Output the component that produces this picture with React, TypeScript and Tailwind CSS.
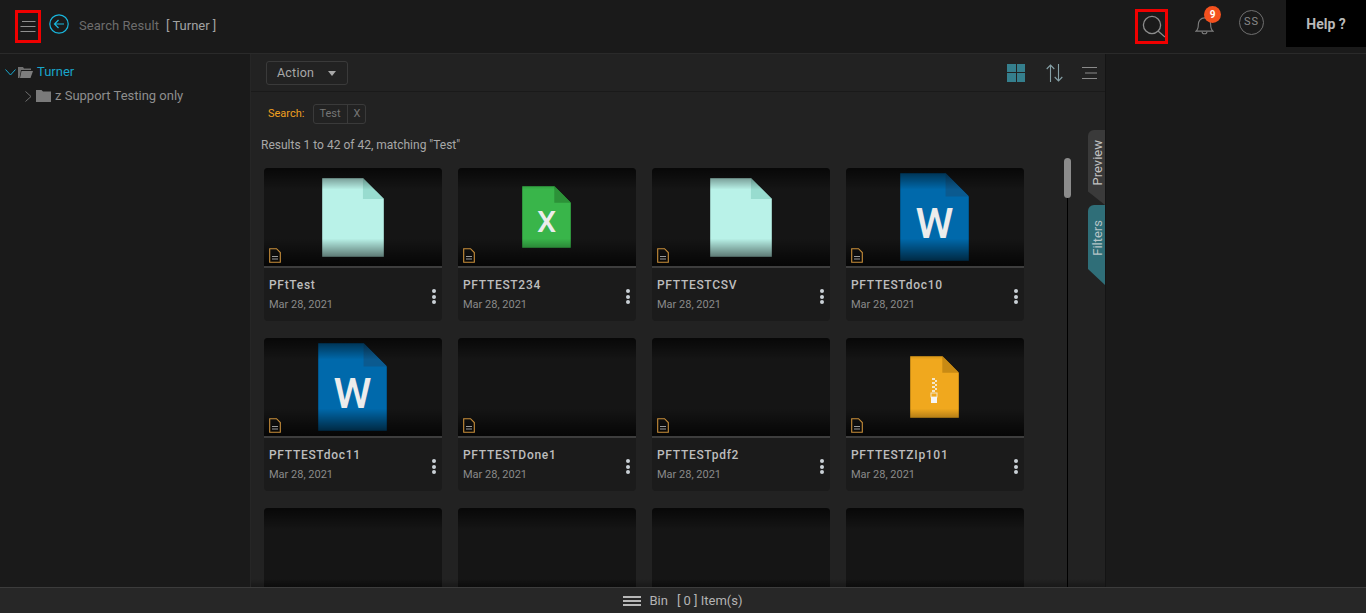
type Thumb = {
  w: number;
  h: number;
  body: string;
  fold: string;
  letter?: string;
  zip?: boolean;
};

const blank: Thumb = { w: 62, h: 79, body: '#b9f2e8', fold: '#98dccf' };
const excel: Thumb = { w: 49, h: 62, body: '#39b54a', fold: '#2c9238', letter: 'X' };
const word: Thumb = { w: 69, h: 88, body: '#0069ab', fold: '#0b5a8f', letter: 'W' };
const zip: Thumb = { w: 49, h: 62, body: '#f0a81e', fold: '#c88a14', zip: true };

// last row is cut by the bin bar, only the thumbnails are in view
const files: { name?: string; thumb?: Thumb }[] = [
  { name: 'PFtTest', thumb: blank },
  { name: 'PFTTEST234', thumb: excel },
  { name: 'PFTTESTCSV', thumb: blank },
  { name: 'PFTTESTdoc10', thumb: word },
  { name: 'PFTTESTdoc11', thumb: word },
  { name: 'PFTTESTDone1' },
  { name: 'PFTTESTpdf2' },
  { name: 'PFTTESTZIp101', thumb: zip },
  {},
  {},
  {},
  {},
];

function FileArt({ thumb }: { thumb: Thumb }) {
  const { w, h } = thumb;
  const fold = w * 0.34;
  return (
    <svg width={w} height={h} viewBox={`0 0 ${w} ${h}`} className={w % 2 ? 'mr-px' : ''}>
      <path d={`M0 0H${w - fold}L${w} ${fold}V${h}H0Z`} fill={thumb.body} stroke="rgba(0,0,0,0.35)" />
      <path d={`M${w - fold} 0L${w} ${fold}H${w - fold}Z`} fill={thumb.fold} />
      {thumb.letter && (
        <text
          x={w / 2}
          y={h * 0.74}
          textAnchor="middle"
          fill="#ececec"
          fontSize={h * 0.49}
          fontWeight="500"
          fontFamily="Roboto, sans-serif"
        >
          {thumb.letter}
        </text>
      )}
      {thumb.zip && (
        <g fill="#f3e6c8">
          <rect x="22" y="22" width="3" height="2" />
          <rect x="25" y="24" width="2" height="2" />
          <rect x="22" y="26" width="3" height="2" />
          <rect x="25" y="28" width="2" height="2" />
          <rect x="22" y="30" width="3" height="2" />
          <rect x="25" y="32" width="2" height="2" />
          <rect x="22" y="34" width="3" height="2" />
          <rect x="21" y="37" width="6" height="4" fill="none" stroke="#f3e6c8" strokeWidth="1" />
          <rect x="21" y="41" width="6" height="6" fill="#f6f6f6" />
        </g>
      )}
    </svg>
  );
}

function DocBadge() {
  return (
    <svg width="12" height="15" viewBox="0 0 12 15" fill="none" className="absolute bottom-[3px] left-[5px]">
      <path d="M.7.7H7.5L11.3 4.5V14.3H.7Z" stroke="#c98f3a" strokeWidth="1.1" />
      <path d="M3 8.5H9M3 11H9" stroke="#9a9a9a" strokeWidth="1.2" />
    </svg>
  );
}

function Card({ name, thumb }: { name?: string; thumb?: Thumb }) {
  return (
    <div className="h-[153px] overflow-hidden rounded-[4px] bg-[#1b1b1b]">
      <div className="relative flex h-[98px] items-center justify-center bg-[#151515]">
        {thumb && <FileArt thumb={thumb} />}
        <div className="absolute inset-0 bg-[linear-gradient(to_bottom,rgba(0,0,0,0.65)_0%,rgba(0,0,0,0)_22%,rgba(0,0,0,0)_72%,rgba(0,0,0,0.75)_100%)]" />
        <DocBadge />
      </div>
      <div className="h-[2px] bg-[#3d3d3d]" />
      {name && (
        <div className="relative px-[5px] pt-[8px]">
          <div className="text-[12px] leading-[18px] font-medium tracking-[0.7px] text-[#bdbdbd]">{name}</div>
          <div className="mt-[2px] text-[11px] leading-[18px] text-[#8a8a8a]">Mar 28, 2021</div>
          <div className="absolute top-[21px] right-[6px] flex flex-col gap-[1.5px]">
            <span className="h-[4px] w-[4px] rounded-full bg-[#c9d0d6]" />
            <span className="h-[4px] w-[4px] rounded-full bg-[#c9d0d6]" />
            <span className="h-[4px] w-[4px] rounded-full bg-[#c9d0d6]" />
          </div>
        </div>
      )}
    </div>
  );
}

function SideTab({ label, tone }: { label: string; tone: 'gray' | 'teal' }) {
  const isTeal = tone === 'teal';
  return (
    <div
      className={
        isTeal
          ? 'flex h-[80px] w-[17px] items-start justify-center rounded-tl-[6px] bg-[#2f6e78] pl-px [clip-path:polygon(0_0,100%_0,100%_100%,0_80%)]'
          : 'flex h-[75px] w-[17px] items-start justify-center rounded-tl-[6px] bg-[#3a3a3a] pl-px [clip-path:polygon(0_0,100%_0,100%_100%,0_82%)]'
      }
    >
      <span
        className={
          isTeal
            ? 'mt-[15px] rotate-180 text-[13px] leading-[17px] text-[#b5c4c7] [writing-mode:vertical-rl]'
            : 'mt-[10px] rotate-180 text-[13px] leading-[17px] text-[#c2c2c2] [writing-mode:vertical-rl]'
        }
      >
        {label}
      </span>
    </div>
  );
}

export default function App() {
  return (
    <div className="flex h-[613px] w-[1366px] flex-col overflow-hidden bg-[#1a1a1a] font-['Roboto',sans-serif]">
      {/* top bar */}
      <header className="flex h-[54px] shrink-0 items-start border-b border-[#2a2a2a]">
        <div className="mt-[10px] ml-[15px] flex h-[33px] w-[26px] items-center justify-center border-[3px] border-[#f00000]">
          <svg width="16" height="11" viewBox="0 0 16 11" stroke="#8f8f8f" strokeWidth="1">
            <path d="M2 .5H15.5M.5 5.5H15.5M.5 10.5H15.5" />
          </svg>
        </div>
        <svg width="20" height="20" viewBox="0 0 20 20" fill="none" stroke="#19b5dc" strokeWidth="1.2" className="mt-[14px] ml-[8px]">
          <circle cx="10" cy="10" r="9.2" />
          <path d="M15 10H5.5M9.5 6L5.5 10L9.5 14" />
        </svg>
        <div className="mt-[17px] ml-[10px] flex text-[13px] leading-[18px]">
          <span className="tracking-[0.05px] text-[#6d6d6d]">Search Result</span>
          <span className="ml-[7px] text-[#a2a2a2]">[ Turner ]</span>
        </div>
        <div className="mt-[9px] ml-auto flex h-[35px] w-[33px] items-center justify-end border-[3px] border-[#f00000]">
          <svg width="23" height="24" viewBox="0 0 23 24" fill="none" stroke="#8c8c8c" strokeWidth="1.3">
            <circle cx="10" cy="10" r="8.6" />
            <path d="M16 16L23 22" />
          </svg>
        </div>
        <div className="relative mt-[14px] ml-[27px] h-[22px] w-[19px]">
          <svg width="19" height="22" viewBox="0 0 20 22" fill="none" stroke="#7d7d7d" strokeWidth="1.2">
            <path d="M1 17.5C3 16 3.5 13.5 3.5 10.5C3.5 6.5 6 3.5 10 3.5C14 3.5 16.5 6.5 16.5 10.5C16.5 13.5 17 16 19 17.5Z" />
            <path d="M7.5 18C7.5 21 12.5 21 12.5 18" />
          </svg>
          <span className="absolute -top-[8px] left-[9px] flex h-[17px] w-[17px] items-center justify-center rounded-full bg-[#f4511e] text-[10px] font-bold text-white">
            9
          </span>
        </div>
        <div className="mt-[10px] ml-[25px] flex h-[25px] w-[25px] items-center justify-center rounded-full border-[1.5px] border-[#6f6f6f] text-[11px] tracking-[1px] text-[#8a8a8a]">
          SS
        </div>
        <div className="ml-[22px] flex h-[47px] w-[80px] items-center justify-center bg-black pt-[1px] text-[14px] font-bold text-[#b9b9b9]">
          Help ?
        </div>
      </header>

      <div className="flex min-h-0 flex-1">
        {/* tree */}
        <aside className="w-[251px] shrink-0 border-r border-[#262626] pt-[9px] text-[13px] leading-[18px]">
          <div className="flex h-[18px] items-center">
            <svg width="11" height="7" viewBox="0 0 11 7" fill="none" stroke="#19a9cf" className="ml-[5px]">
              <path d="M.5.5L5.5 6L10.5.5" />
            </svg>
            <svg width="15" height="12" viewBox="0 0 15 12" className="ml-[2px]">
              <path d="M0 1H5L6 2.5H13V4H3L1.5 12H0Z" fill="#6f6f6f" />
              <path d="M3.5 5H15L12.5 12H2Z" fill="#7d7d7d" />
            </svg>
            <span className="ml-[4px] text-[#19a5c9]">Turner</span>
          </div>
          <div className="mt-[6px] flex h-[18px] items-center">
            <svg width="7" height="11" viewBox="0 0 7 11" fill="none" stroke="#6f6f6f" className="ml-[25px]">
              <path d="M.5.5L6 5.5L.5 10.5" />
            </svg>
            <svg width="15" height="12" viewBox="0 0 15 12" className="ml-[4px]">
              <path d="M0 0H5.5L7 1.5H15V12H0Z" fill="#7a7a7a" />
            </svg>
            <span className="ml-[4px] text-[#8e8e8e]">z Support Testing only</span>
          </div>
        </aside>

        {/* results */}
        <main className="relative flex w-[855px] shrink-0 flex-col overflow-hidden border-r border-[#141414] bg-[#222222]">
          <div className="flex h-[38px] shrink-0 items-center border-b border-[#1a1a1a] pr-[8px] pl-[15px]">
            <div className="flex h-[24px] w-[82px] items-center rounded-[3px] border border-[#3a3a3a] pt-[1px] pl-[10px] text-[12.5px] tracking-[0.2px] text-[#a8a8a8]">
              Action
              <span className="ml-[14px] h-0 w-0 border-x-[4px] border-t-[5px] border-x-transparent border-t-[#a8a8a8]" />
            </div>
            <div className="ml-auto grid h-[18px] w-[18px] grid-cols-2 gap-[1px]">
              <span className="bg-[#357f8d]" />
              <span className="bg-[#357f8d]" />
              <span className="bg-[#357f8d]" />
              <span className="bg-[#357f8d]" />
            </div>
            <svg width="17" height="18" viewBox="0 0 17 18" fill="none" stroke="#86a0a6" strokeWidth="1.1" className="ml-[21px]">
              <path d="M4.5 18V1M.7 5L4.5 1L8.3 5M12.5 0V17M8.7 13L12.5 17L16.3 13" />
            </svg>
            <svg width="16" height="12" viewBox="0 0 16 12" stroke="#8a8a8a" className="ml-[18px]">
              <path d="M1 .5H16M4 6H16M1 11.5H16" />
            </svg>
          </div>

          <div className="mt-[12px] flex h-[20px] shrink-0 items-center pl-[17px] text-[11px]">
            <span className="text-[#f0a020]">Search:</span>
            <div className="ml-[9px] flex h-[20px] items-center rounded-[3px] border border-[#3a3a3a] text-[#757575]">
              <span className="w-[34px] border-r border-[#3a3a3a] pl-[5px] leading-[18px]">Test</span>
              <span className="w-[17px] text-center leading-[18px]">X</span>
            </div>
          </div>

          <div className="mt-[12px] shrink-0 pl-[10px] text-[12px] leading-[18px] text-[#a8a8a8]">
            Results 1 to 42 of 42, matching "Test"
          </div>

          <div className="mt-[14px] grid grid-cols-[repeat(4,178px)] gap-x-[16px] gap-y-[17px] pl-[13px]">
            {files.map((file, i) => (
              <Card key={i} name={file.name} thumb={file.thumb} />
            ))}
          </div>

          {/* fade above the bin bar */}
          <div className="absolute right-0 bottom-0 left-0 h-[8px] bg-gradient-to-b from-transparent to-black/30" />

          {/* scrollbar */}
          <div className="absolute top-[144px] bottom-0 left-[816px] w-px bg-black" />
          <div className="absolute top-[104px] left-[813px] h-[40px] w-[7px] rounded-[4px] bg-[#8c8c8c]" />

          {/* side tabs */}
          <div className="absolute top-[76px] right-0 flex flex-col">
            <SideTab label="Preview" tone="gray" />
            <SideTab label="Filters" tone="teal" />
          </div>
        </main>

        <div className="flex-1 bg-[#1a1a1a]" />
      </div>

      {/* bin bar */}
      <footer className="flex h-[26px] shrink-0 items-center justify-center border-t border-[#3c3c3c] bg-[#272727] text-[13px] text-[#b4b4b4]">
        <svg width="18" height="12" viewBox="0 0 18 12" fill="#b8b8b8">
          <rect y="1" width="18" height="2" />
          <rect y="5" width="18" height="2" />
          <rect y="9" width="18" height="2" />
        </svg>
        <span className="ml-[8px]">Bin</span>
        <span className="ml-[9px]">[ 0 ] Item(s)</span>
      </footer>
    </div>
  );
}
